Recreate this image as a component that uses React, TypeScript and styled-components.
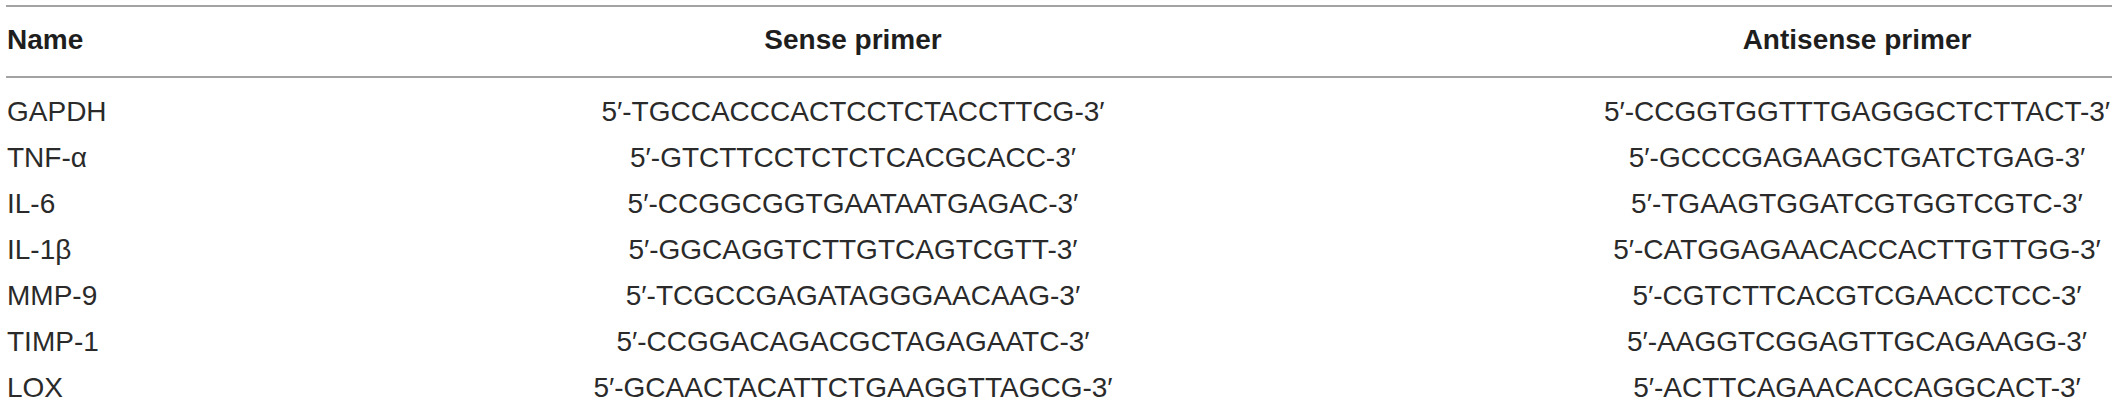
import React from 'react'
import styled, { createGlobalStyle } from 'styled-components'

const GlobalStyle = createGlobalStyle`
  html, body {
    margin: 0;
    padding: 0;
    background: #ffffff;
  }
  body {
    font-family: "Liberation Sans", Arial, Helvetica, sans-serif;
    color: #222222;
  }
`

const Page = styled.div`
  width: 2118px;
  height: 412px;
  padding: 5px 6px 0 6px;
  box-sizing: border-box;
  overflow: hidden;
`

const Table = styled.div`
  width: 2106px;
  display: flex;
  flex-direction: column;
`

const Row = styled.div<{ $head?: boolean }>`
  display: grid;
  grid-template-columns: 98px 1498px 510px;
  border-top: ${({ $head }) => ($head ? '2px solid #a3a3a3' : 'none')};
  border-bottom: ${({ $head }) => ($head ? '2px solid #a3a3a3' : 'none')};
  padding: ${({ $head }) => ($head ? '10px 0 13px' : '0')};
`

const Body = styled.div`
  padding-top: 11px;
  display: flex;
  flex-direction: column;
`

const Cell = styled.div<{ $head?: boolean; $align?: 'left' | 'center' }>`
  font-size: 28px;
  line-height: 46px;
  height: 46px;
  white-space: nowrap;
  font-weight: ${({ $head }) => ($head ? 700 : 400)};
  color: ${({ $head }) => ($head ? '#1e1e1e' : '#2a2a2a')};
  text-align: ${({ $align }) => $align || 'left'};
  padding-left: ${({ $align }) => ($align === 'center' ? '0' : '1px')};
`

const rows: [string, string, string][] = [
  ['GAPDH', '5′-TGCCACCCACTCCTCTACCTTCG-3′', '5′-CCGGTGGTTTGAGGGCTCTTACT-3′'],
  ['TNF-α', '5′-GTCTTCCTCTCTCACGCACC-3′', '5′-GCCCGAGAAGCTGATCTGAG-3′'],
  ['IL-6', '5′-CCGGCGGTGAATAATGAGAC-3′', '5′-TGAAGTGGATCGTGGTCGTC-3′'],
  ['IL-1β', '5′-GGCAGGTCTTGTCAGTCGTT-3′', '5′-CATGGAGAACACCACTTGTTGG-3′'],
  ['MMP-9', '5′-TCGCCGAGATAGGGAACAAG-3′', '5′-CGTCTTCACGTCGAACCTCC-3′'],
  ['TIMP-1', '5′-CCGGACAGACGCTAGAGAATC-3′', '5′-AAGGTCGGAGTTGCAGAAGG-3′'],
  ['LOX', '5′-GCAACTACATTCTGAAGGTTAGCG-3′', '5′-ACTTCAGAACACCAGGCACT-3′'],
]

export default function App() {
  return (
    <>
      <GlobalStyle />
      <Page>
        <Table>
          <Row $head>
            <Cell $head>Name</Cell>
            <Cell $head $align="center">Sense primer</Cell>
            <Cell $head $align="center">Antisense primer</Cell>
          </Row>
          <Body>
            {rows.map(([name, sense, antisense]) => (
              <Row key={name}>
                <Cell>{name}</Cell>
                <Cell $align="center">{sense}</Cell>
                <Cell $align="center">{antisense}</Cell>
              </Row>
            ))}
          </Body>
        </Table>
      </Page>
    </>
  )
}
